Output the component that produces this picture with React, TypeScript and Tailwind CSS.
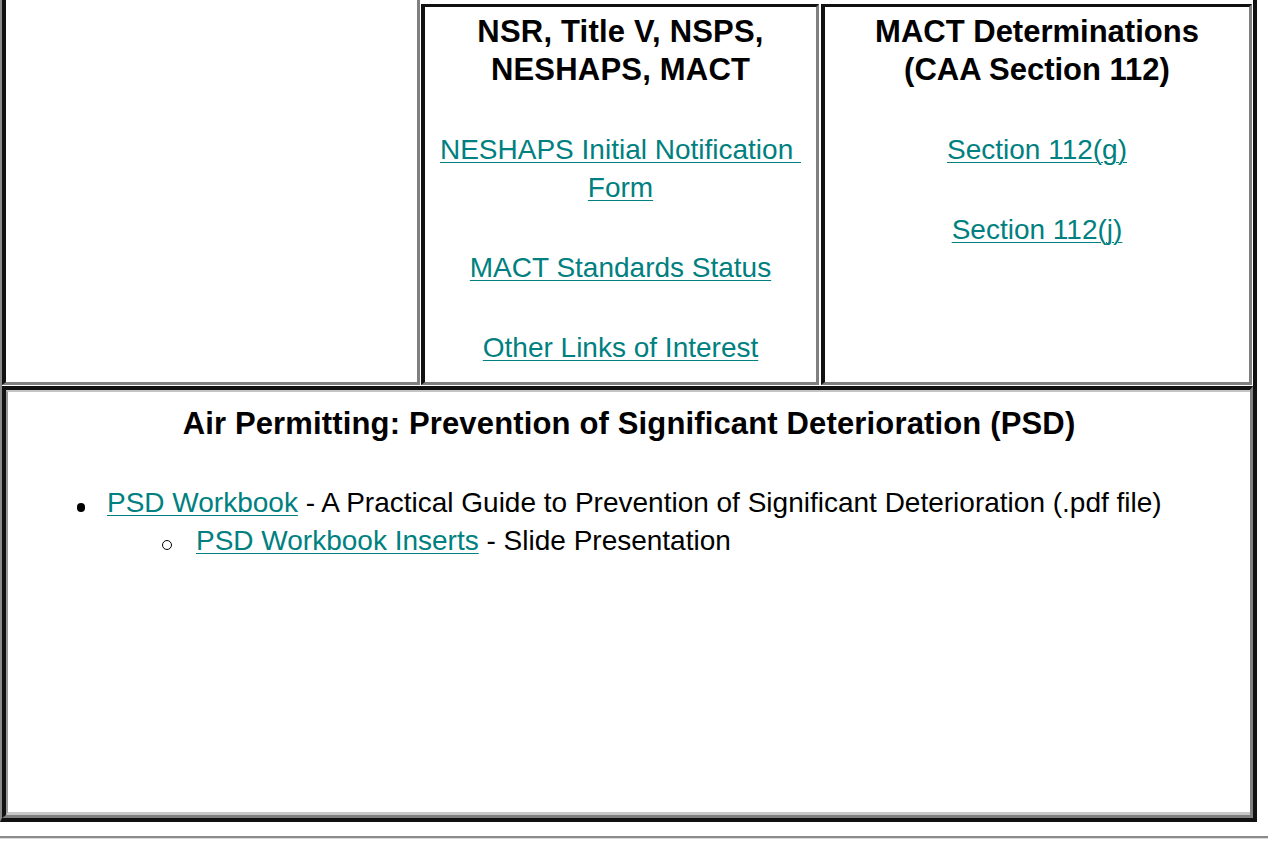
import React from 'react';

const linkCls = "text-[#008080] underline underline-offset-[3px] decoration-1";

export default function App() {
  return (
    <div className="min-h-[841px] bg-white text-black font-['Liberation_Sans',Arial,sans-serif]">
      <div className="w-[1257px] flex flex-col gap-px border-l-2 border-l-[#8a8a8a] border-r-4 border-r-[#111] border-b-4 border-b-[#111]">
        {/* Row 1 */}
        <div className="flex h-[385px]">
          <div className="w-[418px] border-l-4 border-l-[#111] border-r-[3px] border-r-[#808080] border-b-[3px] border-b-[#808080]" />

          <div className="ml-px mt-1 w-[398px] border-l-4 border-l-[#111] border-t-[3px] border-t-[#111] border-r-[3px] border-r-[#808080] border-b-[3px] border-b-[#808080] text-center pt-[6px]">
            <h3 className="text-[31px] leading-[38px] font-bold tracking-[0.2px]">
              NSR, Title V, NSPS,<br />NESHAPS, MACT
            </h3>
            <p className="mt-[42px] text-[28px] leading-[38px]">
              <a href="#" className={linkCls}>NESHAPS Initial Notification&nbsp;<br />Form</a>
            </p>
            <p className="mt-[42px] text-[28px] leading-[38px]">
              <a href="#" className={linkCls}>MACT Standards Status</a>
            </p>
            <p className="mt-[42px] text-[28px] leading-[38px]">
              <a href="#" className={linkCls}>Other Links of Interest</a>
            </p>
          </div>

          <div className="ml-[2px] mt-1 w-[431px] border-l-4 border-l-[#111] border-t-[3px] border-t-[#111] border-r-[3px] border-r-[#808080] border-b-[3px] border-b-[#808080] text-center pt-[6px]">
            <h3 className="text-[31px] leading-[38px] font-bold">
              MACT Determinations<br />(CAA Section 112)
            </h3>
            <p className="mt-[42px] text-[28px] leading-[38px]">
              <a href="#" className={linkCls}>Section 112(g)</a>
            </p>
            <p className="mt-[42px] text-[28px] leading-[38px]">
              <a href="#" className={linkCls}>Section 112(j)</a>
            </p>
          </div>
        </div>

        {/* Row 2 */}
        <div className="h-[432px] border-l-4 border-l-[#111] border-t-4 border-t-[#111] border-r-[3px] border-r-[#808080] border-b-[3px] border-b-[#808080]">
          <div className="h-full border-t-2 border-t-[#c4c4c4] border-l-2 border-l-[#9a9a9a] border-b-[3px] border-b-[#c8c8c8] pt-[13px]">
            <h3 className="text-center text-[31px] leading-[38px] font-bold tracking-[0.15px]">
              Air Permitting: Prevention of Significant Deterioration (PSD)
            </h3>
            <ul className="mt-[41px] text-[28px] leading-[38px]">
              <li className="flex items-start">
                <span className="ml-[69px] mt-[19px] w-[8px] h-[9px] rounded-full bg-black shrink-0" />
                <span className="ml-[22px]">
                  <a href="#" className={linkCls}>PSD Workbook</a> - A Practical Guide to Prevention of Significant Deterioration (.pdf file)
                </span>
              </li>
              <li className="flex items-start">
                <span className="ml-[154px] mt-[18px] w-[10px] h-[10px] rounded-full border border-black shrink-0" />
                <span className="ml-[24px]">
                  <a href="#" className={linkCls}>PSD Workbook Inserts</a> - Slide Presentation
                </span>
              </li>
            </ul>
          </div>
        </div>
      </div>

      <div className="mt-[14px] w-[1268px] border-t-2 border-t-[#8a8a8a] border-b border-b-[#dcdcdc]" />
    </div>
  );
}
